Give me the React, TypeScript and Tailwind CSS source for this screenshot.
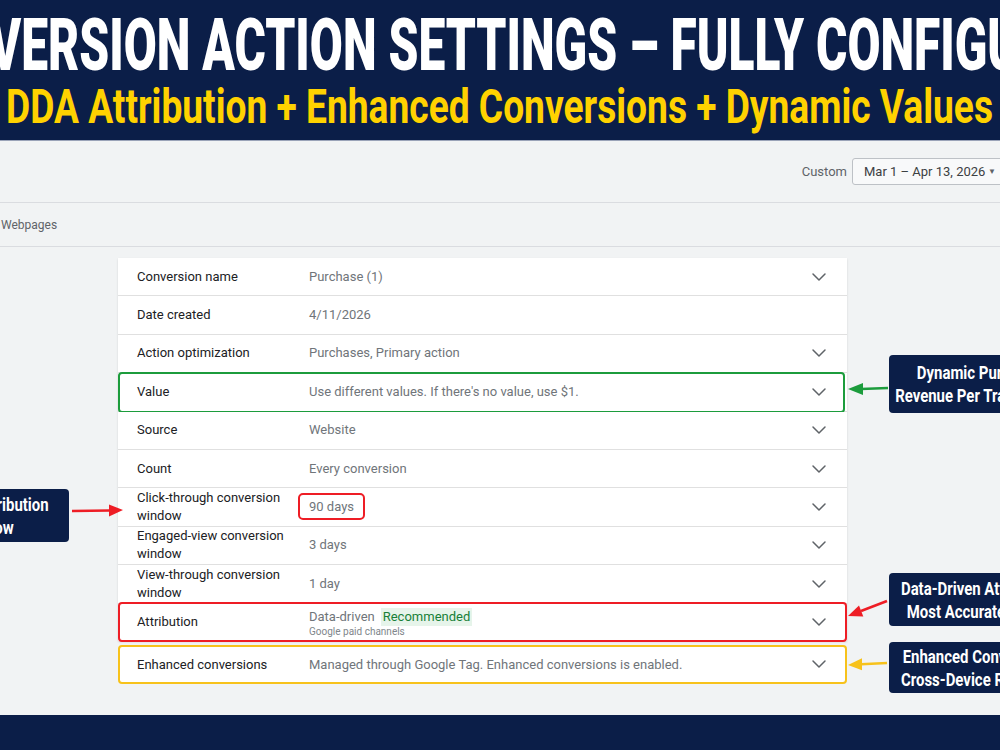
import { ChevronDown } from 'lucide-react';
import type { ReactNode } from 'react';

interface SettingRow {
  label: string;
  value: ReactNode;
  chevron?: boolean;
  outline?: 'green' | 'red';
}

const rows: SettingRow[] = [
  { label: 'Conversion name', value: 'Purchase (1)', chevron: true },
  { label: 'Date created', value: '4/11/2026' },
  { label: 'Action optimization', value: 'Purchases, Primary action', chevron: true },
  {
    label: 'Value',
    value: "Use different values. If there's no value, use $1.",
    chevron: true,
    outline: 'green',
  },
  { label: 'Source', value: 'Website', chevron: true },
  { label: 'Count', value: 'Every conversion', chevron: true },
  {
    label: 'Click-through conversion window',
    value: (
      <span className="-ml-[11px] rounded-[5px] border-2 border-[#ee1d25] px-[9px] py-[4px]">90 days</span>
    ),
    chevron: true,
  },
  { label: 'Engaged-view conversion window', value: '3 days', chevron: true },
  { label: 'View-through conversion window', value: '1 day', chevron: true },
  {
    label: 'Attribution',
    value: (
      <div className="flex flex-col pt-[2px]">
        <div className="flex items-center gap-[6px] leading-[18px]">
          <span>Data-driven</span>
          <span className="bg-[#e6f4ea] px-[2px] text-[#188038]">Recommended</span>
        </div>
        <span className="text-[10px] leading-[12px] text-[#80868b]">Google paid channels</span>
      </div>
    ),
    chevron: true,
    outline: 'red',
  },
];

function Row({ row }: { row: SettingRow }) {
  return (
    <div className="relative grid h-[37.4px] grid-cols-[172px_1fr_auto] items-center bg-white pl-[19px] pr-[16px]">
      <span className="pr-[10px] text-[13px] leading-[18px] text-[#202124]">{row.label}</span>
      <div className="text-[13px] leading-[18px] text-[#70757a]">{row.value}</div>
      <div className="flex w-[24px] justify-center">
        {row.chevron && <ChevronDown size={24} strokeWidth={1.5} className="text-[#5f6368]" />}
      </div>
      {row.outline === 'green' && (
        <div className="pointer-events-none absolute -top-[1px] -bottom-[2px] left-0 right-[2px] rounded-[4px] border-2 border-[#1c9c3c]" />
      )}
      {row.outline === 'red' && (
        <div className="pointer-events-none absolute -top-[2px] -bottom-[1px] left-0 right-0 rounded-[4px] border-2 border-[#ee1d25]" />
      )}
    </div>
  );
}

function Callout({ lines, className }: { lines: string[]; className: string }) {
  return (
    <div
      className={`absolute flex w-[180px] flex-col items-center justify-center rounded-[4px] bg-[#0b1e48] text-[18px] font-bold leading-[23px] text-white ${className}`}
    >
      {lines.map((line) => (
        <span key={line} className="inline-block scale-x-[0.83] whitespace-nowrap">
          {line}
        </span>
      ))}
    </div>
  );
}

export default function App() {
  return (
    <div className="relative flex h-[750px] w-[1000px] flex-col overflow-hidden bg-[#f1f3f4] font-['Roboto','Liberation_Sans',sans-serif]">
      {/* banner */}
      <header className="h-[141px] shrink-0 border-b border-[#9aa3b8] bg-[#0b1e48] pt-[10px]">
        <div className="flex h-[73px] justify-center whitespace-nowrap">
          <span className="inline-block shrink-0 scale-x-[0.665] text-[72px] font-black leading-[72px] text-white">
            CONVERSION ACTION SETTINGS – FULLY CONFIGURED
          </span>
        </div>
        <div className="flex h-[48px] justify-center whitespace-nowrap">
          <span className="inline-block shrink-0 scale-x-[0.774] text-[48px] font-bold leading-[48px] text-[#ffd200]">
            DDA Attribution + Enhanced Conversions + Dynamic Values
          </span>
        </div>
      </header>

      {/* date range bar */}
      <div className="flex h-[62px] shrink-0 items-center justify-end gap-[5px] border-b border-[#dadce0]">
        <span className="text-[13px] text-[#5f6368]">Custom</span>
        <div className="-mr-[22px] flex h-[27px] w-[170px] items-center justify-between rounded-[3px] border border-[#bdc1c6] bg-[#f8f9fa] pl-[11px] pr-[25px] text-[13px] text-[#3c4043]">
          <span>Mar 1 – Apr 13, 2026</span>
          <span className="text-[8px] text-[#5f6368]">▼</span>
        </div>
      </div>

      <div className="flex h-[44px] shrink-0 items-center border-b border-[#dadce0] pl-px text-[12px] text-[#5f6368]">
        Webpages
      </div>

      <main className="flex-1 pl-[118px] pt-[11px]">
        <div className="flex w-[729px] flex-col">
          <div className="flex flex-col gap-px bg-[#e0e0e0] shadow-[0_1px_2px_rgba(0,0,0,0.12)]">
            {rows.map((row) => (
              <Row key={row.label} row={row} />
            ))}
          </div>
          <div className="relative mt-[4px] grid h-[39px] grid-cols-[172px_1fr_auto] items-center rounded-[4px] border-2 border-[#f7c21b] bg-white pl-[17px] pr-[14px]">
            <span className="text-[13px] text-[#202124]">Enhanced conversions</span>
            <span className="text-[13px] text-[#70757a]">Managed through Google Tag. Enhanced conversions is enabled.</span>
            <div className="flex w-[24px] justify-center">
              <ChevronDown size={24} strokeWidth={1.5} className="text-[#5f6368]" />
            </div>
          </div>
        </div>
      </main>

      <footer className="h-[35px] shrink-0 bg-[#0b1e48]" />

      {/* annotations */}
      <Callout lines={['Dynamic Purchase', 'Revenue Per Transaction']} className="left-[889px] top-[355px] h-[58px]" />
      <Callout lines={['Data-Driven Attribution', 'Most Accurate Model']} className="left-[889px] top-[573px] h-[53px]" />
      <Callout lines={['Enhanced Conversions', 'Cross-Device Recovery']} className="left-[889px] top-[642px] h-[51px]" />
      <Callout lines={['90-Day Attribution', 'Window']} className="left-[-95px] top-[489px] h-[53px] !w-[164px]" />

      <svg className="pointer-events-none absolute inset-0" width={1000} height={750}>
        <line x1={888} y1={388} x2={861} y2={389} stroke="#1c9c3c" strokeWidth={2.5} />
        <polygon points="848,389 863,383 863,395" fill="#1c9c3c" />

        <line x1={887} y1={601} x2={861} y2={611} stroke="#ee1d25" strokeWidth={2.5} />
        <polygon points="848,616 863.3,616.6 859,605.4" fill="#ee1d25" />

        <line x1={887} y1={663} x2={861} y2={664.3} stroke="#f7c21b" strokeWidth={2.5} />
        <polygon points="848,665 862,658.3 862,670.3" fill="#f7c21b" />

        <line x1={72} y1={511} x2={110} y2={510.5} stroke="#ee1d25" strokeWidth={2.5} />
        <polygon points="123,510 109,504.5 109,516.5" fill="#ee1d25" />
      </svg>
    </div>
  );
}
